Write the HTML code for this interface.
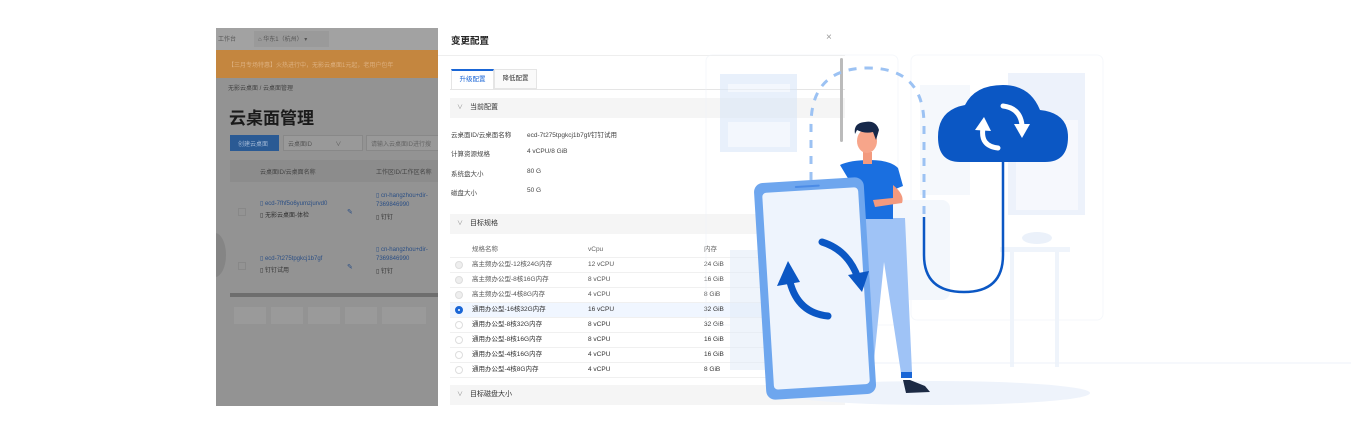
<!DOCTYPE html>
<html><head><meta charset="utf-8"><style>
*{margin:0;padding:0;box-sizing:border-box}
body{width:1351px;height:435px;background:#fff;position:relative;overflow:hidden;font-family:"Liberation Sans","Noto Sans CJK SC",sans-serif;}
.a{position:absolute;white-space:nowrap}
.left{position:absolute;left:216px;top:28px;width:222px;height:378px;background:#939393;overflow:hidden}
.m{position:absolute;left:438px;top:28px;width:407px;height:378px;background:#fff;overflow:hidden;font-size:7px;color:#333}
.sec{position:absolute;left:12px;width:395px;height:20px;background:#f5f5f5;font-size:7px;line-height:20px;padding-left:20px;color:#333}
.sec:before{content:"∨";position:absolute;left:7px;font-size:6px;color:#888}
.row{position:absolute;left:12px;width:395px;height:15px;border-bottom:1px solid #f0f0f0;line-height:14px;font-size:6.5px}
.row span{position:absolute}
.rad{position:absolute;left:5px;top:3px;width:8px;height:8px;border-radius:50%;border:1px solid #ddd;background:#fff}
</style></head><body>
<div class="left">
 <div class="a" style="left:0;top:0;width:222px;height:22px;background:#a2a2a2"></div>
 <div class="a" style="left:2px;top:6px;font-size:6px;color:#555">工作台</div>
 <div class="a" style="left:38px;top:3px;width:75px;height:16px;background:#9a9a9a"></div>
 <div class="a" style="left:42px;top:6px;font-size:6px;color:#555">⌂ 华东1（杭州） ▾</div>
 <div class="a" style="left:0;top:22px;width:222px;height:28px;background:#c4863f"></div>
 <div class="a" style="left:12px;top:32px;font-size:6px;color:#ddb07f">【三月专场特惠】火热进行中，无影云桌面1元起，老用户包年</div>
 <div class="a" style="left:12px;top:55px;font-size:6px;color:#444">无影云桌面 / 云桌面管理</div>
 <div class="a" style="left:13px;top:76px;font-size:17px;font-weight:bold;color:#1a1a1a">云桌面管理</div>
 <div class="a" style="left:14px;top:107px;width:49px;height:16px;background:#2a5a94"></div>
 <div class="a" style="left:22px;top:111px;font-size:6px;color:#9fb6d4">创建云桌面</div>
 <div class="a" style="left:67px;top:107px;width:80px;height:16px;background:#999;border:1px solid #888"></div>
 <div class="a" style="left:72px;top:111px;font-size:6px;color:#555">云桌面ID&nbsp;&nbsp;&nbsp;&nbsp;&nbsp;&nbsp;&nbsp;&nbsp;&nbsp;&nbsp;&nbsp;&nbsp;&nbsp;&nbsp;∨</div>
 <div class="a" style="left:150px;top:107px;width:80px;height:16px;background:#999;border:1px solid #888"></div>
 <div class="a" style="left:155px;top:111px;font-size:6px;color:#666">请输入云桌面ID进行搜</div>
 <div class="a" style="left:14px;top:132px;width:210px;height:22px;background:#8c8c8c"></div>
 <div class="a" style="left:44px;top:139px;font-size:6px;color:#444">云桌面ID/云桌面名称</div>
 <div class="a" style="left:160px;top:139px;font-size:6px;color:#444">工作区ID/工作区名称</div>
 <div class="a" style="left:22px;top:180px;width:8px;height:8px;border:1px solid #888"></div>
 <div class="a" style="left:44px;top:172px;font-size:6px;color:#2b4f85">▯ ecd-7fhf5o6yumzjurvd0</div>
 <div class="a" style="left:44px;top:182px;font-size:6px;color:#333">▯ 无影云桌面-体检</div>
 <div class="a" style="left:131px;top:180px;font-size:7px;color:#2b4f85">✎</div>
 <div class="a" style="left:160px;top:164px;font-size:6px;color:#2b4f85">▯ cn-hangzhou+dir-</div>
 <div class="a" style="left:160px;top:174px;font-size:6px;color:#2b4f85">7369846990</div>
 <div class="a" style="left:160px;top:184px;font-size:6px;color:#333">▯ 钉钉</div>
 <div class="a" style="left:22px;top:234px;width:8px;height:8px;border:1px solid #888"></div>
 <div class="a" style="left:44px;top:227px;font-size:6px;color:#2b4f85">▯ ecd-7t275tpgkcj1b7gf</div>
 <div class="a" style="left:44px;top:237px;font-size:6px;color:#333">▯ 钉钉试用</div>
 <div class="a" style="left:131px;top:235px;font-size:7px;color:#2b4f85">✎</div>
 <div class="a" style="left:160px;top:218px;font-size:6px;color:#2b4f85">▯ cn-hangzhou+dir-</div>
 <div class="a" style="left:160px;top:228px;font-size:6px;color:#2b4f85">7369846990</div>
 <div class="a" style="left:160px;top:238px;font-size:6px;color:#333">▯ 钉钉</div>
 <div class="a" style="left:-12px;top:205px;width:22px;height:44px;border-radius:50%;background:#858585"></div>
 <div class="a" style="left:14px;top:265px;width:210px;height:4px;background:#6e6e6e"></div>
 <div class="a" style="left:18px;top:279px;width:32px;height:17px;background:#9a9a9a"></div>
 <div class="a" style="left:55px;top:279px;width:32px;height:17px;background:#9a9a9a"></div>
 <div class="a" style="left:92px;top:279px;width:32px;height:17px;background:#9a9a9a"></div>
 <div class="a" style="left:129px;top:279px;width:32px;height:17px;background:#9a9a9a"></div>
 <div class="a" style="left:166px;top:279px;width:44px;height:17px;background:#9a9a9a"></div>
</div>

<div class="m">
 <div class="a" style="left:13px;top:5px;font-size:9.5px;font-weight:bold;color:#222">变更配置</div>
 <div class="a" style="left:388px;top:4px;font-size:10px;color:#999">×</div>
 <div class="a" style="left:0;top:27px;width:407px;height:1px;background:#eee"></div>
 <div class="a" style="left:13px;top:41px;width:43px;height:20px;border-top:2px solid #1a66d6;border-left:1px solid #e5e5e5;border-right:1px solid #e5e5e5;font-size:6.5px;color:#1a66d6;line-height:17px;text-align:center">升级配置</div>
 <div class="a" style="left:56px;top:41px;width:43px;height:20px;border:1px solid #e5e5e5;font-size:6.5px;line-height:18px;text-align:center;background:#fafafa">降低配置</div>
 <div class="a" style="left:12px;top:61px;width:395px;height:1px;background:#e5e5e5"></div>
 <div class="sec" style="top:70px">当前配置</div>
 <div class="a" style="left:13px;top:101px;font-size:6.5px;color:#444">云桌面ID/云桌面名称</div><div class="a" style="left:89px;top:101px;font-size:6.5px;color:#444">ecd-7t275tpgkcj1b7gf/钉钉试用</div>
 <div class="a" style="left:13px;top:120px;font-size:6.5px;color:#444">计算资源规格</div><div class="a" style="left:89px;top:120px;font-size:6.5px;color:#444">4 vCPU/8 GiB</div>
 <div class="a" style="left:13px;top:140px;font-size:6.5px;color:#444">系统盘大小</div><div class="a" style="left:89px;top:140px;font-size:6.5px;color:#444">80 G</div>
 <div class="a" style="left:13px;top:159px;font-size:6.5px;color:#444">磁盘大小</div><div class="a" style="left:89px;top:159px;font-size:6.5px;color:#444">50 G</div>
 <div class="sec" style="top:186px">目标规格</div>
 <div class="row" style="top:215px;color:#666"><span style="left:22px">规格名称</span><span style="left:138px">vCpu</span><span style="left:254px">内存</span></div>
 <div class="row" style="top:230px;color:#555"><i class="rad" style="background:#eee"></i><span style="left:22px">高主频办公型-12核24G内存</span><span style="left:138px">12 vCPU</span><span style="left:254px">24 GiB</span></div>
 <div class="row" style="top:245px;color:#555"><i class="rad" style="background:#eee"></i><span style="left:22px">高主频办公型-8核16G内存</span><span style="left:138px">8 vCPU</span><span style="left:254px">16 GiB</span></div>
 <div class="row" style="top:260px;color:#555"><i class="rad" style="background:#eee"></i><span style="left:22px">高主频办公型-4核8G内存</span><span style="left:138px">4 vCPU</span><span style="left:254px">8 GiB</span></div>
 <div class="row" style="top:275px;background:#f0f6ff;color:#333"><i class="rad" style="border:3px solid #1a66d6;background:#fff"></i><span style="left:22px">通用办公型-16核32G内存</span><span style="left:138px">16 vCPU</span><span style="left:254px">32 GiB</span></div>
 <div class="row" style="top:290px;color:#333"><i class="rad"></i><span style="left:22px">通用办公型-8核32G内存</span><span style="left:138px">8 vCPU</span><span style="left:254px">32 GiB</span></div>
 <div class="row" style="top:305px;color:#333"><i class="rad"></i><span style="left:22px">通用办公型-8核16G内存</span><span style="left:138px">8 vCPU</span><span style="left:254px">16 GiB</span></div>
 <div class="row" style="top:320px;color:#333"><i class="rad"></i><span style="left:22px">通用办公型-4核16G内存</span><span style="left:138px">4 vCPU</span><span style="left:254px">16 GiB</span></div>
 <div class="row" style="top:335px;color:#333"><i class="rad"></i><span style="left:22px">通用办公型-4核8G内存</span><span style="left:138px">4 vCPU</span><span style="left:254px">8 GiB</span></div>
 <div class="sec" style="top:357px">目标磁盘大小</div>
 <div class="a" style="left:402px;top:30px;width:3px;height:84px;background:#bbb;border-radius:2px"></div>
</div>

<svg class="a" style="left:0;top:0" width="1351" height="435" viewBox="0 0 1351 435">
 <g opacity="0.55">
  <rect x="706" y="55" width="192" height="270" rx="6" fill="none" stroke="#eef2f8"/>
  <rect x="911" y="55" width="192" height="265" rx="6" fill="none" stroke="#eef2f8"/>
  <rect x="720" y="74" width="77" height="78" fill="#d7e5f8"/>
  <rect x="728" y="84" width="62" height="8" fill="#fff" opacity=".5"/>
  <rect x="728" y="122" width="62" height="25" fill="#fff" opacity=".5"/>
  <rect x="1008" y="73" width="77" height="142" fill="#dfe9f8"/>
  <rect x="1016" y="120" width="62" height="90" fill="#fff" opacity=".5"/>
  <rect x="920" y="85" width="50" height="110" fill="#eef3fa"/>
  <rect x="730" y="250" width="35" height="120" fill="#e3ecf8"/>
  <rect x="1000" y="247" width="70" height="5" fill="#e3ecf8"/>
  <rect x="1010" y="252" width="4" height="115" fill="#e3ecf8"/>
  <rect x="1055" y="252" width="4" height="115" fill="#e3ecf8"/>
  <ellipse cx="1037" cy="238" rx="15" ry="6" fill="#dbe6f6"/>
  <rect x="890" y="200" width="60" height="100" rx="8" fill="#eaf1fb"/>
 </g>
 <line x1="850" y1="363" x2="1351" y2="363" stroke="#eef2f8"/>
 <ellipse cx="935" cy="393" rx="155" ry="12" fill="#eef3fb"/>
 <path d="M811 180 V125 Q811 68 868 68 Q924 68 924 125 V215" fill="none" stroke="#9cc2f3" stroke-width="3" stroke-dasharray="8 8"/>
 <path d="M1003 160 V255 Q1003 292 964 292 Q924 292 924 255 V217" fill="none" stroke="#0b57c4" stroke-width="2.5"/>
 <path d="M960 162 Q938 162 938 137 Q938 110 965 105 Q975 85 1003 85 Q1030 85 1040 110 Q1068 113 1068 137 Q1068 162 1045 162 Z" fill="#0b57c4"/>
 <path d="M998 148 Q980 146 983 128" fill="none" stroke="#fff" stroke-width="5" stroke-linecap="round"/>
 <path d="M975 130 L984 117 L991 131 Z" fill="#fff"/>
 <path d="M1003 106 Q1020 108 1022 125" fill="none" stroke="#fff" stroke-width="5" stroke-linecap="round"/>
 <path d="M1014 124 L1030 124 L1022 138 Z" fill="#fff"/>
 <path d="M858 218 L905 218 L912 372 L901 373 L884 262 L872 380 L860 380 Z" fill="#9fc3f6"/>
 <rect x="901" y="372" width="11" height="6" fill="#1a66d6"/>
 <path d="M903 380 L910 380 L925 386 L930 392 L906 393 Z" fill="#1c2a44"/>
 <path d="M840 165 Q850 160 870 160 Q890 160 898 168 L903 186 L893 190 L893 219 L857 219 L855 190 Z" fill="#1a6fe0"/>
 <path d="M893 185 Q905 195 902 203 L875 207 L873 200 L893 198 Z" fill="#f39a7e"/>
 <rect x="863" y="152" width="9" height="12" fill="#f39a7e"/>
 <ellipse cx="867" cy="141" rx="10" ry="12" fill="#f7a58a"/>
 <path d="M855 134 Q853 123 865 122 Q876 120 879 130 L876 140 L873 132 Q865 134 857 130 Z" fill="#16284a"/>
 <g transform="rotate(-3.5 815 288)">
  <rect x="760" y="180" width="110" height="217" rx="9" fill="#6ea6ee"/>
  <rect x="768" y="190" width="96" height="197" rx="4" fill="#eef4fd"/>
  <rect x="801" y="185" width="25" height="2" rx="1" fill="#4b8be6"/>
 </g>
 <path d="M822 242 Q848 250 858 278" fill="none" stroke="#0b57c4" stroke-width="7" stroke-linecap="round"/>
 <path d="M848 275 L869 271 L862 292 Z" fill="#0b57c4"/>
 <path d="M828 316 Q798 313 790 282" fill="none" stroke="#0b57c4" stroke-width="7" stroke-linecap="round"/>
 <path d="M777 286 L788 261 L800 282 Z" fill="#0b57c4"/>
</svg>
</body></html>
